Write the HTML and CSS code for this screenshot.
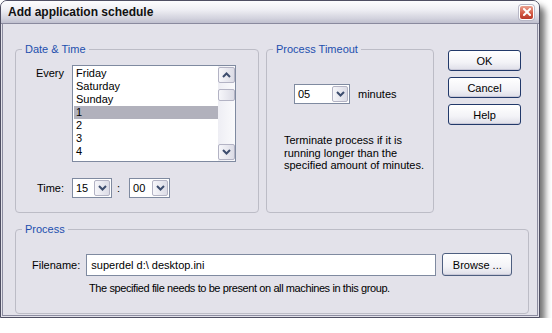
FILE: index.html
```html
<!DOCTYPE html>
<html lang="en">
<head>
    <meta charset="UTF-8">
    <title>Add application schedule</title>
    <link rel="stylesheet" href="styles.css">
</head>
<body>
    <div class="window">
        <div class="titlebar">
            <span class="title">Add application schedule</span>
            <span class="close">
                <svg width="8" height="8" viewBox="0 0 8 8"><path d="M1 1L7 7M7 1L1 7" stroke="#fff" stroke-width="2" stroke-linecap="square"/></svg>
            </span>
        </div>

        <div class="body">
            <div class="top">
                <!-- Date & Time -->
                <fieldset class="group date-group">
                    <legend>Date &amp; Time</legend>
                    <div class="date-body">
                        <span class="label every">Every</span>
                        <div class="listbox">
                            <ul class="items">
                                <li>Friday</li>
                                <li>Saturday</li>
                                <li>Sunday</li>
                                <li class="selected">1</li>
                                <li>2</li>
                                <li>3</li>
                                <li>4</li>
                            </ul>
                            <div class="scrollbar">
                                <span class="sb-btn">
                                    <svg width="9" height="6" viewBox="0 0 9 6"><path d="M1 5L4.5 1.5L8 5" fill="none" stroke="#3d4d6e" stroke-width="2"/></svg>
                                </span>
                                <span class="sb-track"><span class="sb-thumb"></span></span>
                                <span class="sb-btn">
                                    <svg width="9" height="6" viewBox="0 0 9 6"><path d="M1 1L4.5 4.5L8 1" fill="none" stroke="#3d4d6e" stroke-width="2"/></svg>
                                </span>
                            </div>
                        </div>

                        <span class="label">Time:</span>
                        <div class="time-row">
                            <div class="combo combo-hour">
                                <span class="value">15</span>
                                <span class="drop"><svg width="9" height="6" viewBox="0 0 9 6"><path d="M1 1L4.5 4.5L8 1" fill="none" stroke="#3d4d6e" stroke-width="2"/></svg></span>
                            </div>
                            <span class="colon">:</span>
                            <div class="combo combo-min">
                                <span class="value">00</span>
                                <span class="drop"><svg width="9" height="6" viewBox="0 0 9 6"><path d="M1 1L4.5 4.5L8 1" fill="none" stroke="#3d4d6e" stroke-width="2"/></svg></span>
                            </div>
                        </div>
                    </div>
                </fieldset>

                <!-- Process Timeout -->
                <fieldset class="group timeout-group">
                    <legend>Process Timeout</legend>
                    <div class="timeout-body">
                        <div class="timeout-row">
                            <div class="combo combo-timeout">
                                <span class="value">05</span>
                                <span class="drop"><svg width="9" height="6" viewBox="0 0 9 6"><path d="M1 1L4.5 4.5L8 1" fill="none" stroke="#3d4d6e" stroke-width="2"/></svg></span>
                            </div>
                            <span>minutes</span>
                        </div>
                        <p class="hint">Terminate process if it is<br>running longer than the<br>specified amount of minutes.</p>
                    </div>
                </fieldset>

                <div class="buttons">
                    <button class="btn">OK</button>
                    <button class="btn">Cancel</button>
                    <button class="btn">Help</button>
                </div>
            </div>

            <!-- Process -->
            <fieldset class="group process-group">
                <legend>Process</legend>
                <div class="process-body">
                    <div class="file-row">
                        <span class="label">Filename:</span>
                        <div class="textbox">superdel d:\ desktop.ini</div>
                        <button class="btn browse">Browse ...</button>
                    </div>
                    <p class="note">The specified file needs to be present on all machines in this group.</p>
                </div>
            </fieldset>
        </div>
    </div>
</body>
</html>
```

FILE: styles.css
```css
* {
    box-sizing: border-box;
}
body {
    margin: 0;
    background: #fff;
    font-family: "Liberation Sans", Arial, sans-serif;
    font-size: 11px;
    color: #000;
}
.window {
    width: 540px;
    height: 318px;
    border: 1px solid #4f4f63;
    border-radius: 7px 7px 0 0;
    background: #e3e2ea;
    box-shadow: 5px 6px 6px rgba(0, 0, 0, 0.55);
    display: flex;
    flex-direction: column;
    overflow: hidden;
}
.titlebar {
    height: 23px;
    flex: none;
    display: flex;
    align-items: center;
    justify-content: space-between;
    padding: 0 5px 0 7px;
    background: linear-gradient(#fdfdfe, #efeff4 40%, #d2d2dd 80%, #c0c0cf);
    border-bottom: 1px solid #8a8a9e;
}
.title {
    font-weight: bold;
    font-size: 12px;
    color: #111;
}
.close {
    width: 15px;
    height: 15px;
    border: 1px solid #fff;
    border-radius: 3px;
    background: linear-gradient(#eba291, #d45a45 55%, #b8382a);
    box-shadow: 0 0 0 1px #b7b7c6;
    display: flex;
    align-items: center;
    justify-content: center;
}
.body {
    flex: 1;
    margin: 0 1px 1px;
    border: 1px solid #8c8ca0;
    border-top: none;
    padding: 19px 0 0 12px;
}
.top {
    display: flex;
    align-items: flex-start;
}
.group {
    margin: 0;
    padding: 0;
    min-width: 0;
    border: 1px solid #bcbcc6;
    border-radius: 4px;
}
.group legend {
    margin-left: 6px;
    padding: 0 3px;
    line-height: 13px;
    color: #1d4fae;
}
.date-group {
    width: 244px;
    height: 170px;
}
.date-body {
    display: grid;
    grid-template-columns: 48px auto;
    column-gap: 8px;
    row-gap: 16px;
    padding-top: 9px;
}
.label {
    text-align: right;
}
.every {
    padding-top: 2px;
}
.date-body .label {
    align-self: center;
}
.date-body .every {
    align-self: start;
}
.listbox {
    width: 164px;
    height: 97px;
    border: 1px solid #7f8aa0;
    background: #fff;
    display: flex;
}
.items {
    flex: 1;
    margin: 0;
    padding: 1px 0 0 1px;
    list-style: none;
}
.items li {
    height: 13px;
    line-height: 13px;
    padding-left: 2px;
}
.items .selected {
    background: #b1b1bc;
}
.scrollbar {
    width: 17px;
    display: flex;
    flex-direction: column;
    padding: 1px 0;
    background: linear-gradient(90deg, #eeeef4, #fafafc);
}
.sb-btn,
.drop,
.sb-thumb {
    border: 1px solid #b3b3c4;
    border-radius: 2px;
    background: linear-gradient(90deg, #f6f6fa, #dcdce6);
}
.sb-btn {
    height: 16px;
    display: flex;
    align-items: center;
    justify-content: center;
}
.sb-track {
    flex: 1;
    padding-top: 6px;
}
.sb-thumb {
    display: block;
    height: 12px;
}
.time-row {
    display: flex;
    align-items: center;
}
.combo {
    height: 20px;
    display: flex;
    border: 1px solid #7f8aa0;
    background: #fff;
}
.combo .value {
    flex: 1;
    padding-left: 3px;
    line-height: 18px;
}
.drop {
    width: 16px;
    margin: 1px;
    display: flex;
    align-items: center;
    justify-content: center;
}
.combo-hour {
    width: 40px;
}
.combo-min {
    width: 41px;
}
.combo-timeout {
    width: 56px;
}
.colon {
    margin: 0 9px 0 5px;
}
.timeout-group {
    width: 168px;
    height: 170px;
    margin-left: 7px;
}
.timeout-body {
    padding: 28px 0 0 17px;
}
.timeout-row {
    display: flex;
    align-items: center;
    gap: 8px;
    margin-left: 10px;
}
.hint {
    margin: 30px 0 0;
    line-height: 12.5px;
}
.buttons {
    display: flex;
    flex-direction: column;
    gap: 6px;
    margin: 7px 0 0 14px;
}
.btn {
    width: 73px;
    height: 21px;
    padding: 0;
    font-family: inherit;
    font-size: 11px;
    color: #000;
    border: 1px solid #22396a;
    border-radius: 3px;
    background: linear-gradient(#ffffff, #f3f3f7 60%, #dedee8);
    box-shadow: inset 0 -1px #c9c9d8;
}
.process-group {
    width: 514px;
    height: 91px;
    margin-top: 10px;
}
.process-body {
    padding: 17px 0 0 16px;
}
.file-row {
    display: flex;
    align-items: center;
}
.textbox {
    width: 350px;
    height: 22px;
    margin-left: 6px;
    padding-left: 4px;
    line-height: 20px;
    border: 1px solid #7f8aa0;
    background: #fff;
}
.browse {
    width: 70px;
    height: 23px;
    margin-left: 6px;
    border-color: #4e5f80;
}
.note {
    margin: 6px 0 0 57px;
    line-height: 13px;
    letter-spacing: -0.4px;
}
```
